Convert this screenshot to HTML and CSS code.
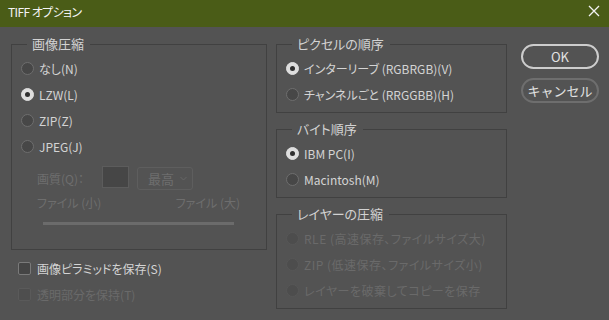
FILE: index.html
```html
<!DOCTYPE html>
<html lang="ja">
<head>
    <meta charset="UTF-8">
    <title>TIFF オプション</title>
    <link rel="stylesheet" href="styles.css">
</head>
<body>
    <div class="titlebar">
        <span class="title">TIFF オプション</span>
        <svg class="close" width="12" height="12" viewBox="0 0 12 12">
            <path d="M1 1 L11 11 M11 1 L1 11" stroke="#f2f2f2" stroke-width="1.3" fill="none"/>
        </svg>
    </div>

    <div class="dialog">
        <div class="col-left">
            <fieldset class="group">
                <legend>画像圧縮</legend>
                <div class="group-body">
                    <div class="option"><span class="radio"></span>なし(N)</div>
                    <div class="option"><span class="radio checked"></span>LZW(L)</div>
                    <div class="option"><span class="radio"></span>ZIP(Z)</div>
                    <div class="option"><span class="radio"></span>JPEG(J)</div>

                    <div class="quality-row">
                        <span class="quality-label">画質(Q)：</span>
                        <span class="quality-input"></span>
                        <span class="quality-select">最高
                            <svg width="7" height="5" viewBox="0 0 7 5"><path d="M0.5 1 L3.5 4 L6.5 1" stroke="#666" fill="none"/></svg>
                        </span>
                    </div>
                    <div class="size-labels">
                        <span>ファイル (小)</span>
                        <span>ファイル (大)</span>
                    </div>
                    <div class="slider"></div>
                </div>
            </fieldset>

            <div class="option check-option"><span class="checkbox"></span>画像ピラミッドを保存(S)</div>
            <div class="option check-option disabled"><span class="checkbox"></span>透明部分を保持(T)</div>
        </div>

        <div class="col-mid">
            <fieldset class="group">
                <legend>ピクセルの順序</legend>
                <div class="group-body">
                    <div class="option"><span class="radio checked"></span>インターリーブ (RGBRGB)(V)</div>
                    <div class="option"><span class="radio"></span>チャンネルごと (RRGGBB)(H)</div>
                </div>
            </fieldset>

            <fieldset class="group">
                <legend>バイト順序</legend>
                <div class="group-body">
                    <div class="option"><span class="radio checked"></span>IBM PC(I)</div>
                    <div class="option"><span class="radio"></span>Macintosh(M)</div>
                </div>
            </fieldset>

            <fieldset class="group">
                <legend>レイヤーの圧縮</legend>
                <div class="group-body">
                    <div class="option disabled wide"><span class="radio"></span>RLE (高速保存、ファイルサイズ大)</div>
                    <div class="option disabled wide"><span class="radio"></span>ZIP (低速保存、ファイルサイズ小)</div>
                    <div class="option disabled wide"><span class="radio"></span>レイヤーを破棄してコピーを保存</div>
                </div>
            </fieldset>
        </div>

        <div class="col-buttons">
            <button class="btn btn-default">OK</button>
            <button class="btn">キャンセル</button>
        </div>
    </div>
</body>
</html>
```

FILE: styles.css
```css
body {
    margin: 0;
    width: 609px;
    height: 320px;
    overflow: hidden;
    background-color: #535353;
    color: #d4d4d4;
    font-family: "Noto Sans CJK JP", "Noto Sans", sans-serif;
    font-size: 12px;
    font-feature-settings: "palt";
}
.titlebar {
    height: 27px;
    background-color: #4a5c17;
    display: flex;
    align-items: flex-start;
    justify-content: space-between;
    padding: 4px 9px 0 8px;
    box-sizing: border-box;
    color: #f4f4f4;
    line-height: 16px;
}
.title {
    letter-spacing: -0.6px;
}
.close {
    margin-top: 1px;
}
.dialog {
    display: flex;
    align-items: flex-start;
    padding: 9px 10px 0 11px;
}
.col-left {
    width: 256px;
}
.col-mid {
    width: 231px;
    margin-left: 9px;
    display: flex;
    flex-direction: column;
    gap: 8px;
}
.col-buttons {
    width: 78px;
    margin-left: 14px;
    margin-top: 8px;
    display: flex;
    flex-direction: column;
    gap: 9px;
}
.group {
    margin: 0;
    padding: 0;
    border: 1px solid #414141;
    min-width: 0;
}
.group legend {
    margin-left: 15px;
    padding: 0 6px 0 5px;
    line-height: 16px;
    font-size: 13px;
    color: #d2d2d2;
}
.group-body {
    padding: 3px 0 5px 9px;
}
.option {
    height: 26px;
    display: flex;
    align-items: center;
    gap: 5px;
    white-space: nowrap;
}
.option.disabled {
    color: #6a6a6a;
}
.option.wide {
    letter-spacing: 0.5px;
}
.radio {
    width: 13px;
    height: 13px;
    box-sizing: border-box;
    border-radius: 50%;
    border: 1px solid #6e6e6e;
    background-color: #474747;
    display: flex;
    align-items: center;
    justify-content: center;
    flex-shrink: 0;
}
.radio.checked {
    border-color: #dedede;
    background-color: #dedede;
}
.radio.checked::after {
    content: "";
    width: 5px;
    height: 5px;
    border-radius: 50%;
    background-color: #2f2f2f;
}
.disabled .radio {
    border-color: #575757;
    background-color: #4d4d4d;
}
.check-option {
    margin-left: 7px;
    gap: 6px;
}
.check-option:first-of-type {
    margin-top: 5px;
}
.checkbox {
    width: 13px;
    height: 13px;
    box-sizing: border-box;
    border: 1px solid #7a7a7a;
    border-radius: 2px;
    background-color: #454545;
}
.disabled .checkbox {
    border-color: #5a5a5a;
    background-color: #4e4e4e;
}
.quality-row {
    display: flex;
    align-items: center;
    margin-top: 7px;
    padding-left: 16px;
    height: 24px;
    color: #6e6e6e;
}
.quality-label {
    width: 65px;
}
.quality-input {
    width: 27px;
    height: 22px;
    box-sizing: border-box;
    border: 1px solid #5c5c5c;
    background-color: #464646;
    margin-top: -2px;
}
.quality-select {
    width: 56px;
    height: 23px;
    box-sizing: border-box;
    margin-left: 8px;
    border: 1px solid #5e5e5e;
    border-radius: 3px;
    display: flex;
    align-items: center;
    justify-content: space-between;
    padding: 0 5px 0 10px;
    font-size: 13px;
}
.size-labels {
    display: flex;
    justify-content: space-between;
    padding: 0 26px 0 16px;
    margin-top: 5px;
    line-height: 16px;
    color: #6e6e6e;
}
.slider {
    height: 3px;
    background-color: #6b6b6b;
    margin: 11px 32px 19px 22px;
}
.btn {
    height: 25px;
    border: 2px solid #6e6e6e;
    border-radius: 13px;
    background-color: transparent;
    color: #e2e2e2;
    font-family: inherit;
    font-size: 13px;
    padding: 0;
}
.btn-default {
    border-color: #cdcdcd;
}
```
